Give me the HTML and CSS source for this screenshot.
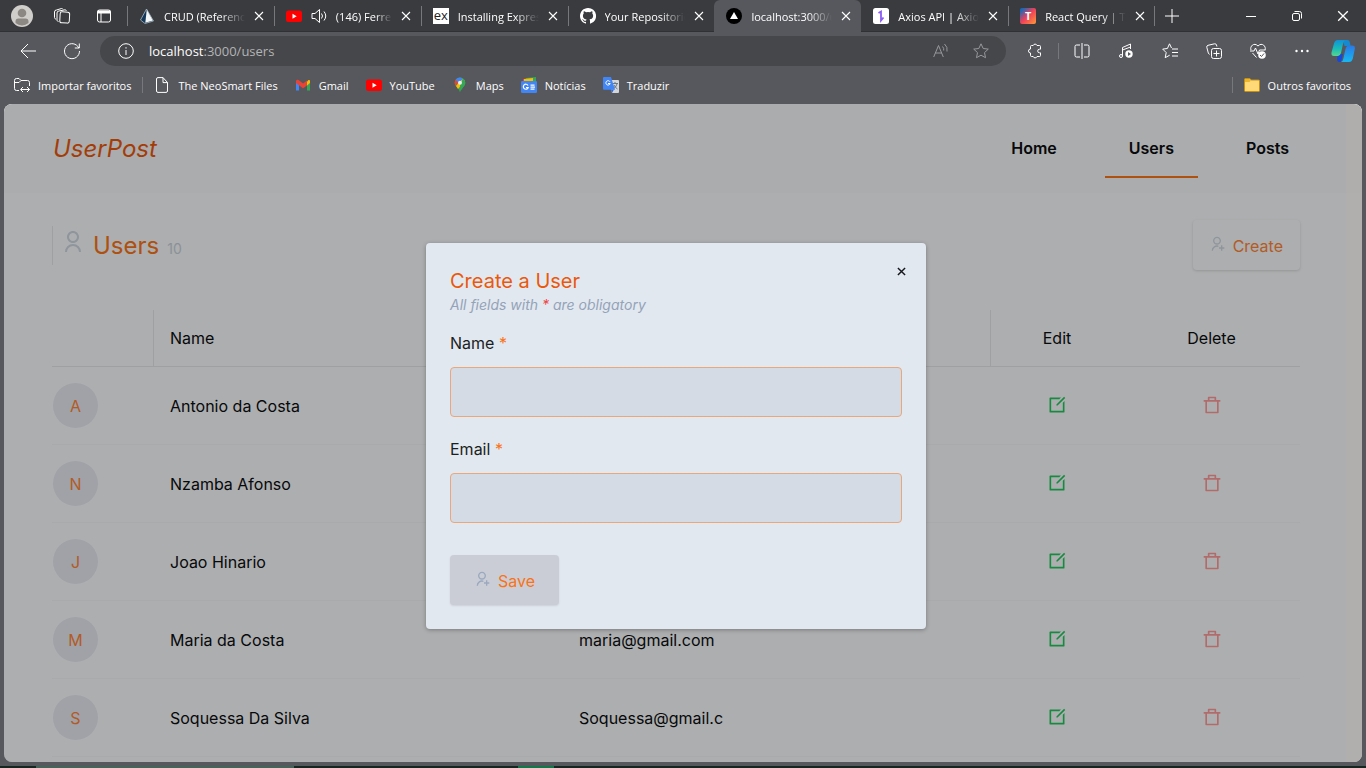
FILE: index.html
```
<!DOCTYPE html>
<html lang="en">
<head>
<meta charset="utf-8">
<title>UserPost</title>
<link rel="stylesheet" href="styles.css">
</head>
<body>
<svg class="defs" aria-hidden="true">
  <symbol id="x" viewBox="0 0 10 10"><path d="M1 1l8 8M9 1L1 9" stroke="currentColor" stroke-width="1.1"/></symbol>
  <symbol id="yt" viewBox="0 0 16 16"><rect y="2.500" width="16" height="11.500" rx="2.500" fill="#f00"/><path d="M6.500 5.800v5l4.200-2.500z" fill="#fff"/></symbol>
  <symbol id="user" viewBox="0 0 24 24"><path d="M4 22a8 8 0 1 1 16 0h-2a6 6 0 1 0-12 0H4zm8-9c-3.315 0-6-2.685-6-6s2.685-6 6-6 6 2.685 6 6-2.685 6-6 6zm0-2c2.210 0 4-1.790 4-4s-1.790-4-4-4-4 1.790-4 4 1.790 4 4 4z"/></symbol>
  <symbol id="user-add" viewBox="0 0 24 24"><path d="M14 14.252v2.090A6 6 0 0 0 6 22l-2-.001a8 8 0 0 1 10-7.748zM12 13c-3.315 0-6-2.685-6-6s2.685-6 6-6 6 2.685 6 6-2.685 6-6 6zm0-2c2.210 0 4-1.790 4-4s-1.790-4-4-4-4 1.790-4 4 1.790 4 4 4zm6 6v-3h2v3h3v2h-3v3h-2v-3h-3v-2h3z"/></symbol>
  <symbol id="edit" viewBox="0 0 24 24"><path d="M16.757 3l-2 2H5v14h14V9.243l2-2V20a1 1 0 0 1-1 1H4a1 1 0 0 1-1-1V4a1 1 0 0 1 1-1h12.757zm3.728-.9L21.900 3.516l-9.192 9.192-1.412.003-.002-1.417L20.485 2.100z"/></symbol>
  <symbol id="trash" viewBox="0 0 24 24"><path d="M17 6h5v2h-2v13a1 1 0 0 1-1 1H5a1 1 0 0 1-1-1V8H2V6h5V3a1 1 0 0 1 1-1h8a1 1 0 0 1 1 1v3zm1 2H6v12h12V8zM9 4v2h6V4H9z"/></symbol>
</svg>

<div class="tabstrip">
  <div class="strip-left">
    <button class="profile" aria-label="Profile"><svg viewBox="0 0 22 22" width="22" height="22"><circle cx="11" cy="11" r="11" fill="#d0cecb"/><circle cx="11" cy="8" r="4.300" fill="#8b8782"/><path d="M4.500 18v-1.500a3 3 0 0 1 3-3h7a3 3 0 0 1 3 3V18a10 10 0 0 1-13 0z" fill="#8b8782"/></svg></button>
    <button class="strip-btn" aria-label="Workspaces"><svg class="ln" viewBox="0 0 18 18" width="18" height="18"><rect x="7" y="5" width="9.500" height="11" rx="2" transform="rotate(3 12 10)"/><path d="M5.500 14.500c-1 0-1.500-.7-1.500-1.500V6a2 2 0 0 1 2-2l6-1.200c.8 0 1.300.5 1.500 1"/><path d="M3 12c-1 0-1.500-.7-1.500-1.500V5a2 2 0 0 1 2-2l5-1.500c.8 0 1.300.3 1.500.8"/></svg></button>
    <button class="strip-btn" aria-label="Tab actions"><svg class="ln" viewBox="0 0 16 16" width="16" height="16"><rect x="1.500" y="2" width="13" height="12" rx="2"/><path d="M1.500 4h13" stroke-width="3"/><path d="M5 5v9"/></svg></button>
  </div>
  <div class="tabs">
    <div class="tab"><svg viewBox="0 0 16 16" width="16" height="16"><path d="M7.500 1L1.500 12l4.500 3.500 8.500-2.500z" fill="#15395a"/><path d="M7.800 1.500l-1.500 13.300L14 12.600z" fill="#f4f7f8"/><path d="M7.500 1L1.500 12l4.500 3.500 8.500-2.500z" fill="none" stroke="#b9cbd5" stroke-width=".7"/></svg><span class="tab-label">CRUD (Reference)</span><button class="tab-x" aria-label="Close tab"><svg width="10" height="10"><use href="#x"/></svg></button></div>
    <div class="tab"><svg width="16" height="16"><use href="#yt"/></svg><svg class="ln" viewBox="0 0 16 16" width="16" height="16"><path d="M1 5.500h3l4.500-4v13l-4.500-4H1zM10.500 5.500q2 2.500 0 5M13 3.500q3.500 4.500 0 9"/></svg><span class="tab-label">(146) Ferreira</span><button class="tab-x" aria-label="Close tab"><svg width="10" height="10"><use href="#x"/></svg></button></div>
    <div class="tab"><span class="fav-ex">ex</span><span class="tab-label">Installing Express</span><button class="tab-x" aria-label="Close tab"><svg width="10" height="10"><use href="#x"/></svg></button></div>
    <div class="tab"><svg viewBox="0 0 16 16" width="16" height="16"><path fill="#fff" d="M8 0C3.580 0 0 3.580 0 8c0 3.540 2.290 6.530 5.470 7.590.4.070.55-.17.55-.38v-1.340c-2.230.48-2.690-1.070-2.690-1.070-.36-.92-.89-1.170-.89-1.170-.73-.5.050-.49.050-.49.8.060 1.230.82 1.230.82.72 1.230 1.870.87 2.330.67.070-.52.28-.87.510-1.070-1.780-.2-3.640-.89-3.640-3.950 0-.87.310-1.590.82-2.150-.08-.2-.36-1.020.08-2.120 0 0 .67-.21 2.200.82a7.600 7.600 0 0 1 4 0c1.530-1.040 2.200-.82 2.200-.82.44 1.100.16 1.920.08 2.120.51.560.82 1.270.82 2.150 0 3.070-1.870 3.750-3.650 3.950.29.25.54.73.54 1.480v2.190c0 .21.150.46.550.38A8 8 0 0 0 8 0z"/></svg><span class="tab-label">Your Repositories</span><button class="tab-x" aria-label="Close tab"><svg width="10" height="10"><use href="#x"/></svg></button></div>
    <div class="tab active"><svg viewBox="0 0 16 16" width="16" height="16"><circle cx="8" cy="8" r="8"/><path d="M8 4l4 7H4z" fill="#fff"/></svg><span class="tab-label">localhost:3000/users</span><button class="tab-x" aria-label="Close tab"><svg width="10" height="10"><use href="#x"/></svg></button></div>
    <div class="tab"><svg viewBox="0 0 16 16" width="16" height="16"><rect width="16" height="16" rx="2.500" fill="#fff"/><path d="M5.500 5L8 3.500v7M10.500 9.500L8 12.500V5" fill="none" stroke="#8b5cf6" stroke-width="1.800"/></svg><span class="tab-label">Axios API | Axios Docs</span><button class="tab-x" aria-label="Close tab"><svg width="10" height="10"><use href="#x"/></svg></button></div>
    <div class="tab"><span class="fav-t">T</span><span class="tab-label">React Query | TanStack</span><button class="tab-x" aria-label="Close tab"><svg width="10" height="10"><use href="#x"/></svg></button></div>
  </div>
  <div class="strip-right">
    <button class="newtab" aria-label="New tab"><svg class="ln" viewBox="0 0 14 14" width="14" height="14"><path d="M7 0v14M0 7h14"/></svg></button>
    <button class="win" aria-label="Minimize"><svg class="ln" viewBox="0 0 10 10" width="10" height="10"><path d="M0 5.500h10"/></svg></button>
    <button class="win" aria-label="Restore"><svg class="ln" viewBox="0 0 10 10" width="10" height="10"><rect x=".5" y="2.500" width="7" height="7" rx="1.500"/><path d="M2.500 .5H7.500a2 2 0 0 1 2 2v5"/></svg></button>
    <button class="win" aria-label="Close"><svg width="12" height="12"><use href="#x"/></svg></button>
  </div>
</div>

<div class="toolbar">
  <button class="tool" aria-label="Back"><svg class="ln" viewBox="0 0 16 16" width="16" height="16"><path d="M16 8H1M8 1L1 8l7 7"/></svg></button>
  <button class="tool" aria-label="Refresh"><svg class="ln" viewBox="0 0 18 18" width="18" height="18"><path d="M15.800 6A7.500 7.500 0 1 0 16.500 9M16.300 1.500V6h-4.500"/></svg></button>
  <div class="address">
    <svg class="ln" viewBox="0 0 16 16" width="16" height="16"><circle cx="8" cy="8" r="7.300"/><path d="M8 7v5M8 4.200v1.400"/></svg>
    <span class="url"><b>localhost</b>:3000/users</span>
    <button class="addr-btn" aria-label="Read aloud"><svg class="ln" viewBox="0 0 16 16" width="16" height="16"><path d="M.7 14L5.500 2.500 10.300 14M2.300 10h6.500M9.500 3.500q1.700 1.700 1.200 4M11.500 1q3.500 3 2.500 7.500"/></svg></button>
    <button class="addr-btn" aria-label="Favorite"><svg class="ln" viewBox="0 0 16 16" width="16" height="16"><path d="M8 .8l2.200 4.700 5.100.6-3.800 3.500 1 5.100L8 12.200l-4.500 2.500 1-5.100L.7 6.100l5.100-.6z"/></svg></button>
  </div>
  <div class="tools">
    <button class="tool" aria-label="Extensions"><svg class="ln" viewBox="0 0 16 16" width="16" height="16"><path d="M4.500 2.500h1.700a2 2 0 0 1 3.800 0h2.500q1 0 1 1v2.700h-1a1.800 1.800 0 0 0 0 3.600h1v2.700q0 1-1 1H10a2 2 0 0 1-3.800 0H4.500q-1 0-1-1V10a2 2 0 0 1 0-4V3.500q0-1 1-1z"/></svg></button>
    <span class="tsep"></span>
    <button class="tool" aria-label="Split screen"><svg class="ln" viewBox="0 0 16 16" width="16" height="16"><path d="M6 2H2.500a1.500 1.500 0 0 0-1.500 1.500v9A1.500 1.500 0 0 0 2.500 14H6M10 2h3.500A1.500 1.500 0 0 1 15 3.500v9a1.500 1.500 0 0 1-1.500 1.500H10M8 0v16"/></svg></button>
    <button class="tool" aria-label="Media"><svg class="ln" viewBox="0 0 16 16" width="16" height="16"><path d="M4.500 13V4.500L12.500 1v5M4.500 7l8-3"/><circle cx="3" cy="13" r="1.500"/><circle cx="11" cy="11" r="3.700" fill="#fff" stroke="none"/><path d="M10 9v4l3-2z" fill="#57585d" stroke="none"/></svg></button>
    <button class="tool" aria-label="Favorites"><svg class="ln" viewBox="0 0 16 16" width="16" height="16"><path d="M9.500 5L7.500 .8 5.400 5.500.7 6.100l3.500 3.500-1 5.100 4.500-2.500M10 6h6M10 9.500h6M10 13h6"/></svg></button>
    <button class="tool" aria-label="Collections"><svg class="ln" viewBox="0 0 16 16" width="16" height="16"><path d="M3.500 11.500L2.300 10 .8 4.300A1.700 1.700 0 0 1 2 2.300L8.500.8a1.700 1.700 0 0 1 2 1.200l.4 1.500"/><rect x="5.500" y="5.500" width="10" height="10" rx="2"/><path d="M10.500 7.500v6M7.500 10.500h6"/></svg></button>
    <button class="tool" aria-label="Performance"><svg class="ln" viewBox="0 0 16 16" width="16" height="16"><path d="M1 7C-.5 3.500 4-1.200 8 3c4-4.200 8.500.5 7 4M0 8h4l1.500-3 2.500 6 1.500-4h6M2.500 10l4 4.500"/><circle cx="12" cy="12" r="3.800" fill="#fff" stroke="none"/><path d="M10 12l1.500 1.500 2.500-3" stroke="#57585d"/></svg></button>
    <button class="tool" aria-label="More"><svg viewBox="0 0 16 16" width="16" height="16" fill="#fff"><circle cx="2.500" cy="8" r="1.200"/><circle cx="8" cy="8" r="1.200"/><circle cx="13.500" cy="8" r="1.200"/></svg></button>
    <button class="copilot" aria-label="Copilot"><svg viewBox="0 0 24 24" width="24" height="24"><defs><linearGradient id="ca" x2="0" y2="1"><stop stop-color="#1291d8"/><stop offset=".55" stop-color="#19bdb8"/><stop offset="1" stop-color="#58d68d"/></linearGradient><linearGradient id="cb" x2="0" y2="1"><stop stop-color="#2b78e4"/><stop offset="1" stop-color="#16b9f2"/></linearGradient></defs><path d="M7 15h5l-2 8H8c-2 0-2.500-3-1-8z" fill="#1848d8"/><path d="M12 1h4.500q2 0 2.500 3l.5 3h-6z" fill="#1689cf"/><path d="M6.500 1H14q-1.500 2-2.500 6l-1.500 7q-1 3-3 3H3q-3 0-2.500-3.500L3 4.500Q4 1 6.500 1z" fill="url(#ca)"/><path d="M17.500 6.500H21q3.500 0 2.800 3.500l-2 9.500q-1 3.500-3.800 3.500h-8q2-1 2.500-4l2-9q1-3.500 3-3.500z" fill="url(#cb)"/></svg></button>
  </div>
</div>

<nav class="bookmarks">
  <a class="bm" href="#"><svg class="ln" viewBox="0 0 16 16" width="16" height="16"><path d="M5 13.500H2.500A2 2 0 0 1 .5 11.500V3.500a2 2 0 0 1 2-2H5l2 2h6.500a2 2 0 0 1 2 2V9M.5 5.500H5l2-2M7 12.500h8.500M9 10l-2.500 2.500L9 15M13 10l2.500 2.500L13 15"/></svg>Importar favoritos</a>
  <span class="bsep"></span>
  <a class="bm" href="#"><svg class="ln" viewBox="0 0 16 16" width="16" height="16"><path d="M9 .6H4A1.500 1.500 0 0 0 2.500 2v12A1.500 1.500 0 0 0 4 15.400h8a1.500 1.500 0 0 0 1.500-1.400V5.500zM9 .6v5h4.500"/></svg>The NeoSmart Files</a>
  <a class="bm" href="#"><svg viewBox="0 0 16 16" width="16" height="16"><path d="M1 4v9.500h3V7z" fill="#4285f4"/><path d="M15 4v9.500h-3V7z" fill="#34a853"/><path d="M12 4.500L13.500 3Q15 2.500 15 4v2l-3 2.500z" fill="#fbbc04"/><path d="M1 6V4q.5-2 2.500-1L8 6.500 12 3.500v5L8 11.300 4 8.300z" fill="#ea4335"/></svg>Gmail</a>
  <a class="bm" href="#"><svg width="16" height="16"><use href="#yt"/></svg>YouTube</a>
  <a class="bm" href="#"><svg viewBox="0 0 16 16" width="16" height="16"><path d="M8 .5a5.300 5.300 0 0 0-5.300 5.300c0 4 4.300 5 5.300 9.700 1-4.700 5.300-5.700 5.300-9.700A5.300 5.300 0 0 0 8 .5z" fill="#34a853"/><path d="M3.800 2.500L6.500 5 4 9Q1.500 5.500 3.800 2.500z" fill="#ea4335"/><path d="M4 9l6-7 3 2-7 8z" fill="#fbbc04"/><path d="M3.800 2.500Q7-1 11 1.500L6.500 6z" fill="#4285f4"/><path d="M11 1.500q2.500 1.500 2.300 4.500-.3 2.500-2.300 4.500L8.500 14 8 8z" fill="#34a853"/><circle cx="8" cy="5.800" r="2" fill="#e9eef2"/></svg>Maps</a>
  <a class="bm" href="#"><svg viewBox="0 0 16 16" width="16" height="16"><path d="M2 2l9-1 1 5H2z" fill="#ea4335"/><path d="M5 1l10-1v7H5z" fill="#34a853"/><path d="M3 2l9-1v6H3z" fill="#fbbc04"/><rect y="4" width="16" height="12" rx="1.200" fill="#4285f4"/><path d="M7 8.500A2.500 2.500 0 1 0 7.200 10.500H5M9.500 8.200h4M9.500 10.200h4.500M9.500 12.200h4" fill="none" stroke="#fff" stroke-width="1.200"/></svg>Notícias</a>
  <a class="bm" href="#"><svg viewBox="0 0 16 16" width="16" height="16"><path d="M6 3h9q1 0 1 1v11q0 1-1 1H9z" fill="#d3d6da"/><path d="M8 12.500h3L9 16z" fill="#3367d6"/><path d="M9.500 6.500h5.500M12 5v1.500M14 7q-1 3.500-4 5M11 8q1 2.500 3.500 4" stroke="#687887" fill="none"/><path d="M1 0h7l4 12.800H1q-1 0-1-1V1q0-1 1-1z" fill="#4285f4"/><path d="M7 4.800A2.200 2.200 0 1 0 7.200 6.500H5" fill="none" stroke="#fff"/></svg>Traduzir</a>
  <span class="spacer"></span>
  <span class="bsep"></span>
  <a class="bm" href="#"><svg viewBox="0 0 16 16" width="16" height="16"><path d="M.5 2.500q0-1 1-1h4l2 1.500h7q1 0 1 1v9.500q0 1-1 1h-13q-1 0-1-1z" fill="#ffd978" stroke="#c58f12"/><path d="M1 2h4.500l1.500 1.500L5.500 5H1z" fill="#eab62f"/></svg>Outros favoritos</a>
</nav>

<div class="viewport">
  <header class="site-header">
    <a class="logo" href="#">UserPost</a>
    <nav class="nav"><a href="#">Home</a><a class="current" href="#">Users</a><a href="#">Posts</a></nav>
  </header>
  <main class="main">
    <div class="title-row">
      <h1 class="title"><svg width="24" height="24"><use href="#user"/></svg>Users<small>10</small></h1>
      <button class="create"><svg width="16" height="16"><use href="#user-add"/></svg>Create</button>
    </div>
    <table class="users">
      <colgroup><col class="c-av"><col class="c-name"><col class="c-mail"><col class="c-edit"><col class="c-del"></colgroup>
      <thead><tr><th></th><th>Name</th><th>Email</th><th class="mid">Edit</th><th class="mid">Delete</th></tr></thead>
      <tbody>
        <tr><td class="av"><span>A</span></td><td>Antonio da Costa</td><td></td><td class="mid"><button class="edit" aria-label="Edit"><svg width="20" height="20"><use href="#edit"/></svg></button></td><td class="mid"><button class="del" aria-label="Delete"><svg width="20" height="20"><use href="#trash"/></svg></button></td></tr>
        <tr><td class="av"><span>N</span></td><td>Nzamba Afonso</td><td></td><td class="mid"><button class="edit" aria-label="Edit"><svg width="20" height="20"><use href="#edit"/></svg></button></td><td class="mid"><button class="del" aria-label="Delete"><svg width="20" height="20"><use href="#trash"/></svg></button></td></tr>
        <tr><td class="av"><span>J</span></td><td>Joao Hinario</td><td></td><td class="mid"><button class="edit" aria-label="Edit"><svg width="20" height="20"><use href="#edit"/></svg></button></td><td class="mid"><button class="del" aria-label="Delete"><svg width="20" height="20"><use href="#trash"/></svg></button></td></tr>
        <tr><td class="av"><span>M</span></td><td>Maria da Costa</td><td>maria@gmail.com</td><td class="mid"><button class="edit" aria-label="Edit"><svg width="20" height="20"><use href="#edit"/></svg></button></td><td class="mid"><button class="del" aria-label="Delete"><svg width="20" height="20"><use href="#trash"/></svg></button></td></tr>
        <tr><td class="av"><span>S</span></td><td>Soquessa Da Silva</td><td>Soquessa@gmail.c</td><td class="mid"><button class="edit" aria-label="Edit"><svg width="20" height="20"><use href="#edit"/></svg></button></td><td class="mid"><button class="del" aria-label="Delete"><svg width="20" height="20"><use href="#trash"/></svg></button></td></tr>
      </tbody>
    </table>
  </main>
  <div class="scroll-track"></div>
  <div class="overlay">
    <form class="modal" role="dialog" aria-labelledby="modal-title">
      <button class="modal-close" type="button" aria-label="Close"><svg viewBox="0 0 10 10" width="9" height="9"><path d="M1 1l8 8M9 1L1 9" stroke="#14171c" stroke-width="1.600"/></svg></button>
      <h2 id="modal-title">Create a User</h2>
      <p class="hint">All fields with <span>*</span> are obligatory</p>
      <label for="name">Name <span>*</span></label>
      <input id="name" type="text">
      <label for="email">Email <span>*</span></label>
      <input id="email" type="email">
      <button class="save" type="submit"><svg width="16" height="16"><use href="#user-add"/></svg>Save</button>
    </form>
  </div>
</div>
<div class="taskbar"><span class="task-search"></span><span class="task-active"></span></div>
</body>
</html>
```
FILE: styles.css
```
* { box-sizing: border-box; }
body {
  margin: 0;
  height: 100vh;
  display: flex;
  flex-direction: column;
  overflow: hidden;
  background: #57585d;
  color: #fff;
  font: 12px "Open Sans", "Noto Sans", sans-serif;
}
button { border: 0; padding: 0; background: none; color: inherit; font: inherit; }
a { color: inherit; text-decoration: none; }
svg { flex: none; display: block; }
.defs { position: absolute; width: 0; height: 0; }
.ln { fill: none; stroke: #fff; stroke-width: 1; }

/* Browser tabs */
.tabstrip {
  display: flex;
  height: 32px;
  flex: none;
  background: #3a3b3e;
  box-shadow: inset 0 -1px #303134;
}
.strip-left { width: 127px; flex: none; display: flex; align-items: center; padding-left: 11px; }
.strip-btn { width: 42px; display: flex; justify-content: center; }
.profile { margin-right: 8px; }
.tabs { flex: 1; display: flex; min-width: 0; }
.tab {
  flex: 1 1 0;
  min-width: 0;
  display: flex;
  align-items: center;
  gap: 9px;
  padding: 0 10px 0 12px;
  position: relative;
  font-size: 11px;
}
.tab::before {
  content: "";
  position: absolute;
  left: 0;
  top: 6px;
  height: 20px;
  border-left: 1px solid #77787b;
}
.tab.active::before, .tab.active + .tab::before { display: none; }
.tab:last-child::after {
  content: "";
  position: absolute;
  right: 0;
  top: 6px;
  height: 20px;
  border-left: 1px solid #77787b;
}
.tab.active { background: #57585d; border-radius: 6px 6px 0 0; }
.tab-label {
  flex: 1;
  min-width: 0;
  overflow: hidden;
  white-space: nowrap;
  mask-image: linear-gradient(to right, #000 70%, transparent);
}
.tab-x { flex: none; }
.fav-ex, .fav-t { width: 16px; height: 16px; flex: none; line-height: 14px; text-align: center; }
.fav-ex { background: #fff; color: #222; font-size: 13px; }
.fav-t {
  border-radius: 2px;
  background: linear-gradient(135deg, #1769b5 10%, #f0425a 50%, #ff9a35);
  font: bold 11px/16px "Open Sans", sans-serif;
}
.strip-right { width: 211px; flex: none; display: flex; align-items: center; }
.newtab { width: 34px; display: flex; justify-content: center; margin-right: 39px; }
.win { width: 46px; display: flex; justify-content: center; }

/* Browser toolbar */
.toolbar { display: flex; flex: none; height: 38px; align-items: center; padding: 0 4px 0 6px; }
.tool { width: 44px; height: 30px; display: flex; align-items: center; justify-content: center; }
.address {
  flex: 1;
  height: 30px;
  margin: 0 7px 0 6px;
  padding: 0 5px 0 18px;
  display: flex;
  align-items: center;
  border-radius: 15px;
  background: #46474a;
}
.url { flex: 1; margin-left: 15px; color: #b3b4b6; font-size: 13px; }
.url b { color: #fff; font-weight: 400; }
.addr-btn { width: 40px; display: flex; justify-content: center; }
.addr-btn .ln { stroke: #98999c; }
.tools { display: flex; align-items: center; }
.tsep { width: 1px; height: 16px; margin: 0 1px; background: #77787c; }
.copilot { width: 38px; display: flex; justify-content: center; }

.bookmarks {
  flex: none;
  height: 34px;
  padding: 0 15px 4px 14px;
  display: flex;
  align-items: center;
  gap: 17px;
  font-size: 11px;
}
.bm { display: flex; align-items: center; gap: 8px; white-space: nowrap; }
.bsep { width: 1px; height: 16px; margin: 0 -6px; background: #77787c; }
.spacer { flex: 1; }

/* Page */
.viewport {
  position: relative;
  flex: 1;
  min-height: 0;
  margin: 0 4px 4px;
  overflow: hidden;
  border-radius: 8px;
  background: #f8fafb;
  color: #0b0d10;
  font: 16px/24px Inter, sans-serif;
}
.site-header {
  display: flex;
  align-items: center;
  justify-content: space-between;
  padding: 14px 49px 15px 49px;
  background: #f5f6f8;
}
.logo { padding-top: 2px; color: #ea580c; font-size: 24px; line-height: 32px; font-style: italic; }
.nav { display: flex; gap: 24px; }
.nav a { padding: 18px 24px 16px; border-bottom: 2px solid transparent; font-weight: 600; }
.nav .current { border-color: #f97316; }
.main { padding: 27px 62px 0 48px; }
.title-row { display: flex; align-items: center; justify-content: space-between; margin-bottom: 40px; }
.title {
  display: flex;
  align-items: baseline;
  margin: 0;
  padding: 4px 0 0 8px;
  border-left: 1px solid #e2e5ea;
  color: #f97316;
  font-size: 24px;
  line-height: 32px;
  font-weight: 400;
}
.title svg { margin-right: 8px; align-self: flex-start; }
.title svg, .create svg { fill: #cdd6e0; }
.title small { margin-left: 8px; color: #c8d0da; font-size: 14px; }
.create, .save { display: flex; align-items: center; gap: 8px; height: 50px; border-radius: 4px; }
.create { padding: 2px 17px 0 16px; color: #ff8436; box-shadow: 0 1px 3px rgba(0, 0, 0, .15); }
.create svg, .save svg { margin-bottom: 4px; }

.users { width: 100%; table-layout: fixed; border-collapse: separate; border-spacing: 0; }
.c-av { width: 102px; }
.c-name { width: 409px; }
.c-edit { width: 133px; }
.c-del { width: 176px; }
.users th {
  height: 57px;
  padding: 0 16px;
  border-bottom: 1px solid #e2e5e9;
  font-weight: 400;
  text-align: left;
}
.users th:nth-child(-n+3) { border-right: 1px solid #e2e5e9; }
.users td { height: 78px; padding: 0 16px; border-bottom: 1px solid #f3f4f6; }
.users .mid { padding: 0 17px 0 16px; text-align: center; }
.users td button { display: block; margin: 0 auto; padding-bottom: 2px; }
.users .av { padding: 0 1px; }
.av span {
  display: block;
  width: 45px;
  height: 45px;
  border-radius: 50%;
  background: #e5e8f1;
  color: #ff8436;
  line-height: 47px;
  text-align: center;
}
.edit svg { fill: #22c55e; }
.del svg { fill: #ff9a9a; }
.scroll-track { position: absolute; inset: 0 0 0 auto; width: 16px; background: rgba(255, 252, 248, .6); }

.overlay {
  position: absolute;
  inset: 0;
  display: flex;
  align-items: center;
  justify-content: center;
  padding: 6px 14px 0 0;
  background: rgba(0, 0, 0, .3);
}
.modal {
  position: relative;
  width: 500px;
  max-width: 100%;
  padding: 24px;
  border-radius: 4px;
  background: #e2e8f0;
  box-shadow: 0 1px 4px rgba(0, 0, 0, .3);
}
.modal-close { position: absolute; top: 19px; right: 16px; width: 18px; height: 18px; display: flex; align-items: center; justify-content: center; }
.modal h2 { margin: 0; color: #ea580c; font-size: 20px; line-height: 28px; font-weight: 400; }
.hint { margin: 0 0 16px; color: #94a3b8; font-size: 14px; line-height: 20px; font-style: italic; }
.hint span { color: #ef4444; }
.modal label { display: block; color: #1b1e22; }
.modal label span { color: #f97316; }
.modal input {
  display: block;
  width: 100%;
  height: 50px;
  margin: 12px 0 20px;
  padding: 0 16px;
  border: 1px solid #eaa77c;
  border-radius: 4px;
  background: #d4dbe4;
  font: inherit;
}
.save { margin-top: 32px; padding: 2px 24px 0; color: #f97316; background: #cacdd6; box-shadow: 0 1px 2px rgba(0, 0, 0, .1); }
.save svg { fill: #9aa9bd; }

.taskbar { flex: none; display: flex; height: 2px; background: #12271f; }
.task-search { width: 258px; margin-left: 36px; background: #42655a; }
.task-active { width: 36px; margin-left: 224px; background: #0c7a49; }
```
